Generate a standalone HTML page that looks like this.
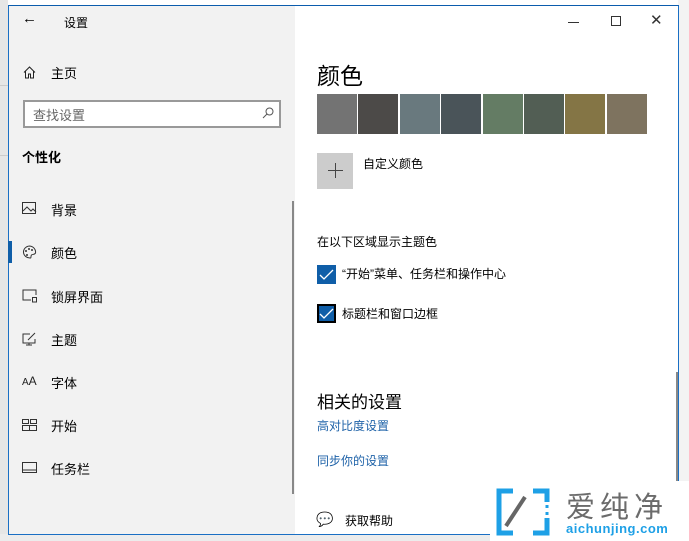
<!DOCTYPE html>
<html><head><meta charset="utf-8"><style>
*{margin:0;padding:0;box-sizing:border-box}
body{width:689px;height:541px;overflow:hidden;background:#fff;font-family:"Liberation Sans","Noto Sans CJK SC",sans-serif;position:relative;color:#000}
.a{position:absolute}
.t{font-size:13px;white-space:nowrap}
.sw{position:absolute;top:94px;width:40px;height:40px}
.nav{position:absolute;left:51px;font-size:13px}
.ic{position:absolute;left:22px}
.cb{position:absolute;left:317px;width:19px;height:19px;background:#0f5ea8}
</style></head><body>
<div class="a" style="left:0;top:0;width:8px;height:541px;background:#e6e6e6"></div>
<div class="a" style="left:0;top:85px;width:8px;height:1px;background:#ccc"></div>
<div class="a" style="left:0;top:155px;width:8px;height:1px;background:#ccc"></div>
<div class="a" style="left:0;top:534px;width:689px;height:7px;background:#ececec"></div>
<div class="a" style="left:678px;top:0;width:11px;height:541px;background:#f3f3f3"></div>
<div class="a" style="left:8px;top:5px;width:287px;height:529px;background:#f2f2f2"></div>
<div class="a" style="left:8px;top:5px;width:671px;height:530px;border:1px solid #1a6fc4;border-top:1px solid #0b5cad"></div>
<div class="a t" style="left:22px;top:10px;font-size:15px">&#8592;</div>
<div class="a t" style="left:64px;top:14px;font-size:12px">设置</div>
<div class="a" style="left:568px;top:22px;width:11px;height:1px;background:#333"></div>
<div class="a" style="left:611px;top:16px;width:10px;height:10px;border:1px solid #333"></div>
<div class="a t" style="left:650px;top:11px;font-size:15px;color:#333">✕</div>
<svg class="a" style="left:23px;top:66px" width="13" height="13" viewBox="0 0 13 13"><path d="M1 6.5L6.5 1L12 6.5M2.5 5v7h3v-4h2v4h3V5" fill="none" stroke="#222" stroke-width="1"/></svg>
<div class="nav" style="top:63px">主页</div>
<div class="a" style="left:23px;top:100px;width:258px;height:28px;border:2px solid #999;background:#fff"></div>
<div class="a t" style="left:33px;top:105px;color:#666">查找设置</div>
<svg class="a" style="left:262px;top:107px" width="12" height="12"><circle cx="7.5" cy="4.5" r="3.5" fill="none" stroke="#555"/><path d="M5 7L1 11" stroke="#555"/></svg>
<div class="a t" style="left:22px;top:147px;font-weight:bold;font-size:13px">个性化</div>
<svg class="ic" style="top:202px" width="15" height="13"><rect x=".5" y=".5" width="13" height="11" fill="none" stroke="#333"/><path d="M1 9l4-4 4 4 2-2 3 3" fill="none" stroke="#333"/></svg>
<div class="nav" style="top:200px">背景</div>
<div class="a" style="left:8px;top:241px;width:4px;height:22px;background:#0f5ea8"></div>
<svg class="ic" style="top:245px" width="15" height="14"><path d="M7.5 1a6.5 6 0 1 0 1 12c1-.5 0-2 1-3s3 0 4-2a6.5 6 0 0 0-6-7z" fill="none" stroke="#333"/><circle cx="4" cy="6" r="1" fill="#333"/><circle cx="7" cy="4" r="1" fill="#333"/><circle cx="10" cy="5" r="1" fill="#333"/><circle cx="5" cy="10" r="1" fill="#333"/></svg>
<div class="nav" style="top:243px">颜色</div>
<svg class="ic" style="top:289px" width="16" height="14"><path d="M9 11H1V1h13v5" fill="none" stroke="#333"/><rect x="10.5" y="8.5" width="4" height="4.5" fill="none" stroke="#333"/></svg>
<div class="nav" style="top:287px">锁屏界面</div>
<svg class="ic" style="top:332px" width="15" height="14"><path d="M8 2H1v9h12V7M4 13h6M7 11v2M6 8l7-7" fill="none" stroke="#333"/></svg>
<div class="nav" style="top:330px">主题</div>
<div class="ic t" style="top:374px;font-size:10px;color:#222">A<span style="font-size:12px">A</span></div>
<div class="nav" style="top:373px">字体</div>
<svg class="ic" style="top:419px" width="15" height="12"><rect x=".5" y=".5" width="6" height="4" fill="none" stroke="#333"/><rect x="8.5" y=".5" width="6" height="4" fill="none" stroke="#333"/><rect x=".5" y="6.5" width="14" height="5" fill="none" stroke="#333"/><path d="M7.5 7v5" stroke="#333"/></svg>
<div class="nav" style="top:416px">开始</div>
<svg class="ic" style="top:462px" width="15" height="11"><rect x=".5" y=".5" width="14" height="10" fill="none" stroke="#333"/><path d="M1 8h13" stroke="#333"/></svg>
<div class="nav" style="top:459px">任务栏</div>
<div class="a" style="left:292px;top:201px;width:2px;height:293px;background:#888"></div>
<div class="a" style="left:676px;top:372px;width:2px;height:150px;background:#888"></div>
<div class="a t" style="left:317px;top:57px;font-size:23px">颜色</div>
<div class="sw" style="left:317px;background:#737373"></div>
<div class="sw" style="left:358px;background:#4c4a48"></div>
<div class="sw" style="left:400px;background:#69797e"></div>
<div class="sw" style="left:441px;background:#4a5459"></div>
<div class="sw" style="left:483px;background:#647c64"></div>
<div class="sw" style="left:524px;background:#525e54"></div>
<div class="sw" style="left:565px;background:#847545"></div>
<div class="sw" style="left:607px;background:#7e735f"></div>
<div class="a" style="left:317px;top:153px;width:36px;height:36px;background:#ccc"></div>
<div class="a" style="left:328px;top:170px;width:15px;height:1px;background:#444"></div>
<div class="a" style="left:335px;top:163px;width:1px;height:15px;background:#444"></div>
<div class="a t" style="left:363px;top:155px;font-size:12px">自定义颜色</div>
<div class="a t" style="left:317px;top:233px;font-size:12px">在以下区域显示主题色</div>
<div class="cb" style="top:265px"></div>
<svg class="a" style="left:319px;top:268px" width="15" height="13"><path d="M1 7l4 4 9-9" fill="none" stroke="#fff" stroke-width="1.3"/></svg>
<div class="a t" style="left:342px;top:265px;font-size:12px">“开始”菜单、任务栏和操作中心</div>
<div class="cb" style="top:304px;border:2px solid #000"></div>
<svg class="a" style="left:319px;top:307px" width="15" height="13"><path d="M1 7l4 4 9-9" fill="none" stroke="#fff" stroke-width="1.3"/></svg>
<div class="a t" style="left:342px;top:305px;font-size:12px">标题栏和窗口边框</div>
<div class="a t" style="left:317px;top:388px;font-size:17px">相关的设置</div>
<div class="a t" style="left:317px;top:417px;font-size:12px;color:#1e62a8">高对比度设置</div>
<div class="a t" style="left:317px;top:452px;font-size:12px;color:#1e62a8">同步你的设置</div>
<div class="a t" style="left:316px;top:511px;font-size:14px">&#128172;</div>
<div class="a t" style="left:345px;top:512px;font-size:12px">获取帮助</div>
<div class="a" style="left:490px;top:481px;width:199px;height:60px;background:#fff"></div>
<svg class="a" style="left:495px;top:488px" width="56" height="48"><path d="M18 3H4v42h14M38 3h14v11M52 30v15H38" fill="none" stroke="#1ea0e6" stroke-width="5"/><path d="M52 17v3M52 24v3" stroke="#1ea0e6" stroke-width="3"/><path d="M11 38L30 9" stroke="#666" stroke-width="4"/></svg>
<div class="a t" style="left:566px;top:484px;font-size:29px;color:#6b6b6b;letter-spacing:5px">爱纯净</div>
<div class="a t" style="left:566px;top:521px;font-size:13px;color:#1ea0e6;font-weight:bold;letter-spacing:0.5px">aichunjing.com</div>
</body></html>
